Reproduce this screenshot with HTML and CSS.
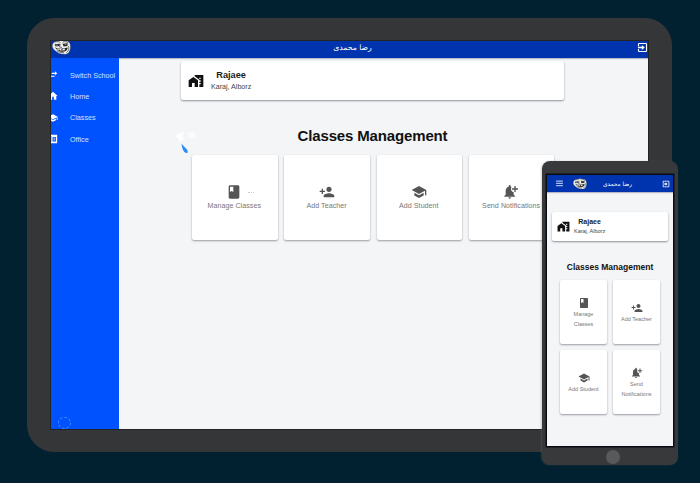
FILE: index.html
```html
<!DOCTYPE html>
<html lang="en">
<head>
<meta charset="utf-8">
<title>Classes Management</title>
<link rel="stylesheet" href="styles.css">
</head>
<body>
<svg class="defs" aria-hidden="true">
  <symbol id="work" viewBox="0 0 24 24"><path d="M1 11v10h5v-6h4v6h5V11L8 6zM10 3v1.970l7 5V11h2v2h-2v2h2v2h-2v4h6V3H10zm9 6h-2V7h2v2z"/></symbol>
  <symbol id="book" viewBox="0 0 24 24"><path d="M18 2H6c-1.100 0-2 .9-2 2v16c0 1.100.9 2 2 2h12c1.100 0 2-.9 2-2V4c0-1.100-.9-2-2-2zM6 4h5v8l-2.500-1.500L6 12V4z"/></symbol>
  <symbol id="person" viewBox="0 0 24 24"><path d="M15 12c2.210 0 4-1.790 4-4s-1.790-4-4-4-4 1.790-4 4 1.790 4 4 4zm-9-2V7H4v3H1v2h3v3h2v-3h3v-2H6zm9 4c-2.670 0-8 1.340-8 4v2h16v-2c0-2.660-5.330-4-8-4z"/></symbol>
  <symbol id="school" viewBox="0 0 24 24"><path d="M5 13.180v4L12 21l7-3.820v-4L12 17l-7-3.820zM12 3L1 9l11 6 9-4.910V17h2V9L12 3z"/></symbol>
  <symbol id="bell" viewBox="0 0 24 24"><path d="M10 22a2 2 0 0 0 2-2H8a2 2 0 0 0 2 2zM16 16v-3.500c-2.500-.7-4-2.500-4-5 0-1.200.3-2.200.8-3-.4-.2-.8-.3-1.300-.4V3a1.500 1.500 0 0 0-3 0v1.100C5.600 4.800 4 7.200 4 10.500V16l-2 2v1h16v-1zM17 3h2v3.500h3.500v2H19V12h-2V8.500h-3.500v-2H17z"/></symbol>
  <symbol id="exit" viewBox="0 0 24 24"><path d="M19 2H5a3 3 0 0 0-3 3v4h2.500V4.500h15v15h-15V15H2v4a3 3 0 0 0 3 3h14a3 3 0 0 0 3-3V5a3 3 0 0 0-3-3zM10.500 6.500V10.500H2v3h8.500v4L17 12z"/></symbol>
  <symbol id="swap" viewBox="0 0 24 24"><path d="M7 11l-4 4 4 4v-3h9v-2.500H7zM22 8l-5-5v3.500H9v3h8V13z"/></symbol>
  <symbol id="home" viewBox="0 0 24 24"><path d="M10 21v-7h4v7h6v-9h3L12 2 1 12h3v9z"/></symbol>
  <symbol id="office" viewBox="0 0 24 24"><path fill-rule="evenodd" d="M2 2h20v20H2zM5 5v14h3V5zm6 2v11h8V7zm2 2h4v2h-4zm0 4h4v2h-4z"/></symbol>
  <symbol id="menu" viewBox="0 0 24 24"><path d="M3 4h18v3H3zm0 6h18v3H3zM3 16h18v3H3z"/></symbol>
  <symbol id="face" viewBox="0 0 36 28">
    <path fill="#f0f0ee" stroke="#333" stroke-width=".6" d="M1 8C3 2 13 0 24 1c8 0 11 5 11 11 0 9-4 15-11 15C15 27 9 23 5 19 1 16 0 13 1 8z"/>
    <path fill="none" stroke="#333" stroke-width="1.300" d="M6 4c4-2 8-1 10 1M20 4c4-2 8-1 11 1M16 8l-2 5 5 1M31 11c2 4 1 9-4 13M9 20c4 3 9 4 14 4"/>
    <path fill="#222" d="M5 8l10-1-1 4-7 1zM20 7l10-1-1 5-7 1zM5 13c5 4 14 4 25 1-1 6-5 8-10 8-7 0-12-4-15-9z"/>
    <path fill="#eee" d="M8 9h3v1H8zM24 8h3v1h-3zM9 16l4 1v2l-3-1zM14 17h4v3l-4-1zM20 17l5-1-1 3-4 1z"/>
  </symbol>
</svg>
<div class="tablet">
  <div class="screen">
    <header class="bar">
      <svg class="avatar"><use href="#face"/></svg>
      <span class="user" lang="fa" dir="rtl">رضا محمدی</span>
      <svg class="exit"><use href="#exit"/></svg>
    </header>
    <div class="body">
      <nav class="side">
        <a><svg><use href="#swap"/></svg>Switch School</a>
        <a><svg><use href="#home"/></svg>Home</a>
        <a><svg><use href="#school"/></svg>Classes</a>
        <a><svg><use href="#office"/></svg>Office</a>
        <i class="ring"></i>
      </nav>
      <main>
        <section class="info">
          <svg><use href="#work"/></svg>
          <div><b>Rajaee</b><span>Karaj, Alborz</span></div>
        </section>
        <h1>Classes Management</h1>
        <div class="grid">
          <div class="card"><svg><use href="#book"/></svg><span>Manage Classes</span></div>
          <div class="card"><svg><use href="#person"/></svg><span>Add Teacher</span></div>
          <div class="card"><svg><use href="#school"/></svg><span>Add Student</span></div>
          <div class="card"><svg><use href="#bell"/></svg><span>Send Notifications</span></div>
        </div>
        <svg class="drop" viewBox="0 0 26 28"><path fill="#fff" d="M0 8l8-5 2 1-3 4 4 2-6 4-1-4z"/><path fill="#fafbfc" d="M14 3h8v8l-7-2z"/><path fill="#2f8df0" d="M7 16l6 6q2 4-1 4-4-1-5-10z"/></svg>
        <i class="dots"></i>
      </main>
    </div>
  </div>
</div>
<div class="phone">
  <div class="screen">
    <header class="bar">
      <svg class="menu"><use href="#menu"/></svg>
      <svg class="avatar"><use href="#face"/></svg>
      <span class="user" lang="fa" dir="rtl">رضا محمدی</span>
      <svg class="exit"><use href="#exit"/></svg>
    </header>
    <main>
      <section class="info">
        <svg><use href="#work"/></svg>
        <div><b>Rajaee</b><span>Karaj, Alborz</span></div>
      </section>
      <h1>Classes Management</h1>
      <div class="grid">
        <div class="card"><svg><use href="#book"/></svg><span>Manage<br>Classes</span></div>
        <div class="card"><svg><use href="#person"/></svg><span>Add Teacher</span></div>
        <div class="card"><svg><use href="#school"/></svg><span>Add Student</span></div>
        <div class="card"><svg><use href="#bell"/></svg><span>Send<br>Notifications</span></div>
      </div>
    </main>
  </div>
  <i class="button"></i>
</div>
</body>
</html>
```
FILE: styles.css
```css
* { box-sizing: border-box; }
body {
  margin: 0;
  width: 700px;
  height: 483px;
  overflow: hidden;
  position: relative;
  padding: 18px 28px 0 27px;
  background: #012030;
  font-family: "Liberation Sans", Arial, sans-serif;
}
.defs { position: absolute; width: 0; height: 0; }
svg { display: block; flex: none; fill: currentColor; }
.tablet {
  height: 434px;
  padding: 23px 24px;
  border-radius: 27px;
  background: #353637;
}
.screen {
  display: flex;
  flex-direction: column;
  overflow: hidden;
  background: #f3f5f7;
}
.tablet .screen { height: 388px; box-shadow: 0 0 0 1px #222425; }
.bar {
  display: flex;
  flex: none;
  align-items: center;
  height: 17px;
  background: #0033ae;
  color: #fff;
  box-shadow: 0 1px 1px #b9bac8;
  position: relative;
}
.tablet .bar { align-items: flex-start; }
.tablet .avatar { width: 19px; height: 15px; margin: -1px 0 0 1px; }
.user {
  flex: 1;
  text-align: center;
  white-space: nowrap;
  font-family: "DejaVu Sans", sans-serif;
}
.tablet .user { font-size: 7.700px; line-height: 14px; padding-right: 3px; }
.tablet .exit { width: 11px; height: 11px; margin-top: 1px; }
.body { display: flex; flex: 1; }
.side {
  position: relative;
  width: 68px;
  padding-top: 6.500px;
  background: #0052ff;
  color: #d3e1ff;
  overflow: hidden;
}
.side a {
  display: flex;
  align-items: center;
  height: 21.300px;
  font-size: 7.200px;
  white-space: nowrap;
}
.side svg { width: 10px; height: 10px; margin: 0 12px 0 -3px; color: #fff; }
.ring {
  position: absolute;
  left: 7px;
  bottom: 0;
  width: 13px;
  height: 12px;
  border: 1px dashed #4590ff;
  border-radius: 50%;
}
main { position: relative; flex: 1; }
.info {
  display: flex;
  align-items: center;
  background: #fff;
  border-radius: 2px;
  box-shadow: 0 1px 2px #8d9095;
  color: #111;
}
.info div { display: flex; flex-direction: column; align-items: center; }
.info b { color: #222; }
.info span { color: #444; }
.tablet .info { width: 383px; height: 39px; margin: 3px 0 0 62px; padding-left: 7px; }
.tablet .info svg { width: 16px; height: 16px; margin-right: 7px; }
.tablet .info b { font-size: 9.200px; line-height: 12px; }
.tablet .info span { font-size: 7.100px; line-height: 12px; }
h1 { margin: 0; text-align: center; color: #111; white-space: nowrap; }
.tablet h1 { font-size: 15px; letter-spacing: -.15px; line-height: 20px; margin: 26px 22px 9px 0; }
.grid { display: grid; }
.tablet .grid { grid-template-columns: repeat(4, 85.500px); gap: 6.800px; margin-left: 73px; }
.card {
  display: flex;
  flex-direction: column;
  align-items: center;
  justify-content: center;
  text-align: center;
  background: #fff;
  border-radius: 2px;
  box-shadow: 0 1px 2px #999ca0;
  color: #555;
}
.card span { color: #777; white-space: nowrap; }
.tablet .card { height: 85px; padding-right: 1px; font-size: 7.100px; line-height: 12px; }
.tablet .card span { letter-spacing: .05px; }
.tablet .card svg { width: 16px; height: 16px; }
.drop { position: absolute; left: 56px; top: 71px; width: 24px; height: 26px; }
.dots { position: absolute; left: 129px; top: 134px; width: 6px; border-top: 1px dotted #ccc; }
.phone {
  position: absolute;
  left: 542px;
  top: 161px;
  width: 136px;
  height: 304px;
  padding: 14px 5px 0;
  border-radius: 8px;
  background: #38393a;
  box-shadow: -1px 0 2px #7775;
}
.phone .screen { width: 126px; height: 271px; box-shadow: 0 0 0 1.500px #080c12; }
.phone .bar { padding: 0 3px 0 8px; }
.phone .menu { width: 9px; height: 9px; color: #a5bcf4; }
.phone .avatar { width: 14px; height: 12px; margin-left: 9px; }
.phone .user { font-size: 5.800px; line-height: 12px; padding-right: 14px; }
.phone .exit { width: 8px; height: 8px; }
.phone .info { width: 116px; height: 29px; margin: 20px 0 0 5px; padding-left: 5px; }
.phone .info svg { width: 13px; height: 13px; margin-right: 4px; }
.phone .info b { font-size: 7px; line-height: 10px; }
.phone .info span { font-size: 5.500px; line-height: 9px; }
.phone h1 { font-size: 8.500px; line-height: 12px; margin: 20px 0 7px; }
.phone .grid { grid-template-columns: 47px 47px; gap: 6px; margin-left: 13px; }
.phone .card { height: 64px; padding-top: 1px; font-size: 5.500px; line-height: 10px; }
.phone .card svg { width: 12px; height: 12px; }
.button {
  display: block;
  width: 14px;
  height: 14px;
  margin: 4px 0 0 59px;
  border-radius: 50%;
  background: #58595b;
}
```
